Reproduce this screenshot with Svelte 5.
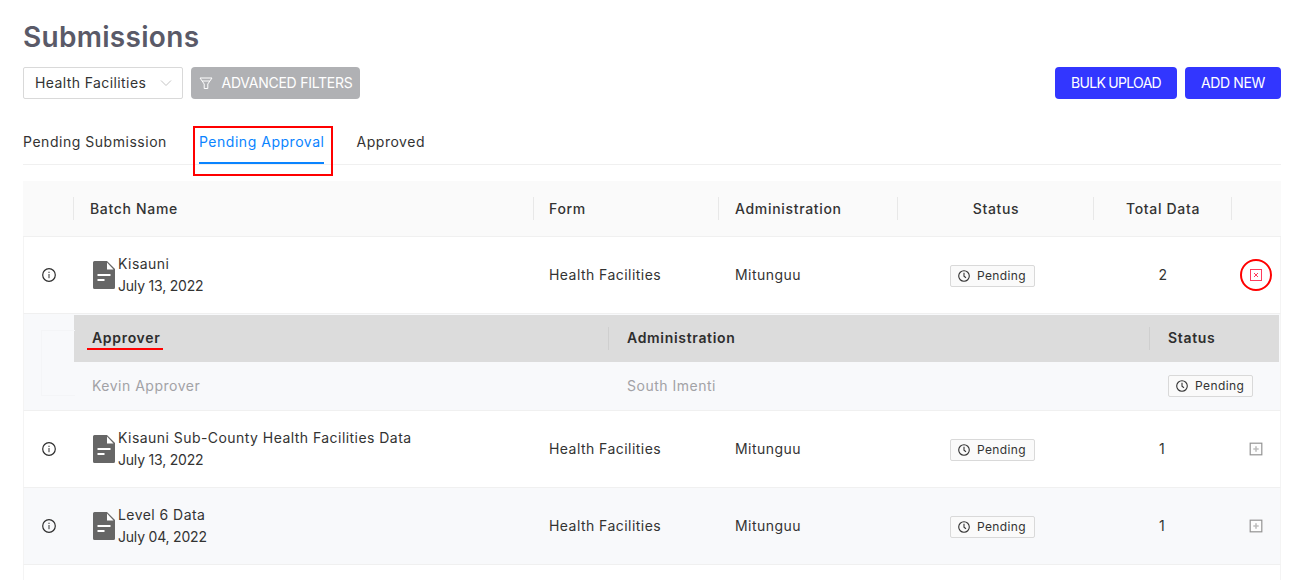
<script>
  const rows = [
    { name: 'Kisauni Sub-County Health Facilities Data', date: 'July 13, 2022', total: 1, alt: false },
    { name: 'Level 6 Data', date: 'July 04, 2022', total: 1, alt: true }
  ];
</script>

{#snippet info()}
  <svg class="info" viewBox="0 0 14 14" width="14" height="14" aria-hidden="true">
    <circle cx="7" cy="7" r="6.300" fill="none" stroke="#2e2e2e" stroke-width="1.200" />
    <rect x="6.400" y="6" width="1.200" height="4.200" fill="#555" />
    <rect x="6.400" y="3.700" width="1.200" height="1.300" fill="#555" />
  </svg>
{/snippet}

{#snippet doc()}
  <svg class="doc" viewBox="0 0 22 28" width="22" height="28" aria-hidden="true">
    <path d="M1.500 0H14L22 8V26.500A1.500 1.500 0 0 1 20.500 28H1.500A1.500 1.500 0 0 1 0 26.500V1.500A1.500 1.500 0 0 1 1.500 0Z" fill="#666" />
    <path d="M14 1.500L20.500 8.500H14Z" fill="#fff" />
    <rect x="4.500" y="13" width="13" height="2" fill="#fff" />
    <rect x="4.500" y="18" width="7" height="2" fill="#fff" />
  </svg>
{/snippet}

{#snippet pending()}
  <span class="tag">
    <svg viewBox="0 0 12 12" width="12" height="12" aria-hidden="true">
      <circle cx="6" cy="6" r="5.300" fill="none" stroke="#333" stroke-width="1.100" />
      <path d="M6 2.800V6.300L8 7.800" fill="none" stroke="#333" stroke-width="1.100" />
    </svg>
    Pending
  </span>
{/snippet}

{#snippet batch(name, date)}
  <div class="batch">
    {@render doc()}
    <div class="names"><div>{name}</div><div class="date">{date}</div></div>
  </div>
{/snippet}

<main>
  <h1>Submissions</h1>

  <div class="toolbar">
    <div class="select">
      <span>Health Facilities</span>
      <svg viewBox="0 0 12 8" width="12" height="8" aria-hidden="true">
        <path d="M1 1.500L6 6.500L11 1.500" fill="none" stroke="#c4c4c4" stroke-width="1" />
      </svg>
    </div>
    <button class="filter">
      <svg viewBox="0 0 14 14" width="14" height="14" aria-hidden="true">
        <path d="M1 2H13L8.800 8V12.500H5.200V8Z M3.200 5H10.800" fill="none" stroke="#fff" stroke-width="1" />
      </svg>
      <span>ADVANCED FILTERS</span>
    </button>
    <div class="spacer"></div>
    <button class="primary bulk">BULK UPLOAD</button>
    <button class="primary add">ADD NEW</button>
  </div>

  <nav class="tabs">
    <span class="tab">Pending Submission</span>
    <span class="tab active">Pending Approval<i class="ink"></i><i class="mark-box"></i></span>
    <span class="tab">Approved</span>
  </nav>

  <section class="table">
    <div class="row head">
      <div class="cell"></div>
      <div class="cell sep wide">Batch Name</div>
      <div class="cell sep">Form</div>
      <div class="cell sep wide">Administration</div>
      <div class="cell sep center nudge">Status</div>
      <div class="cell sep center nudge">Total Data</div>
      <div class="cell sep"></div>
    </div>

    <div class="row body">
      <div class="cell center">{@render info()}</div>
      <div class="cell wide">{@render batch('Kisauni', 'July 13, 2022')}</div>
      <div class="cell line">Health Facilities</div>
      <div class="cell wide line">Mitunguu</div>
      <div class="cell center">{@render pending()}</div>
      <div class="cell center line two">2</div>
      <div class="cell center">
        <span class="toggle">
          <svg viewBox="0 0 14 14" width="14" height="14" aria-hidden="true">
            <rect x="1.500" y="1.500" width="11" height="11" fill="none" stroke="#ff3b5c" stroke-width="1" />
            <path d="M5 5L9 9M9 5L5 9" stroke="#ff3b5c" stroke-width="1" />
          </svg>
          <i class="mark-circle"></i>
        </span>
      </div>
    </div>

    <div class="expanded">
      <div class="ghost"></div>
      <div class="inner">
        <div class="sub subhead">
          <div class="scell first"><span class="approver">Approver<i class="mark-line"></i></span></div>
          <div class="scell sep">Administration</div>
          <div class="scell sep">Status</div>
        </div>
        <div class="sub subbody">
          <div class="scell first">Kevin Approver</div>
          <div class="scell">South Imenti</div>
          <div class="scell">{@render pending()}</div>
        </div>
      </div>
    </div>

    {#each rows as r}
      <div class="row body" class:alt={r.alt}>
        <div class="cell center">{@render info()}</div>
        <div class="cell wide">{@render batch(r.name, r.date)}</div>
        <div class="cell line">Health Facilities</div>
        <div class="cell wide line">Mitunguu</div>
        <div class="cell center">{@render pending()}</div>
        <div class="cell center line">{r.total}</div>
        <div class="cell center">
          <svg class="plus" viewBox="0 0 14 14" width="14" height="14" aria-hidden="true">
            <rect x="1.200" y="1.200" width="11.600" height="11.600" fill="#fdfdfd" stroke="#949494" stroke-width="1.200" />
            <path d="M7 4.300V9.700M4.300 7H9.700" stroke="#bdbdbd" stroke-width="1.600" />
          </svg>
        </div>
      </div>
    {/each}
    <div class="tail"></div>
  </section>
</main>

<style>
  :global(body) {
    margin: 0;
    background: #fff;
    overflow: hidden;
  }
  main {
    height: 580px;
    box-sizing: border-box;
    padding: 0 14px 0 23px;
    font-family: Inter, "Open Sans", sans-serif;
    font-size: 14px;
    color: #333;
    overflow: hidden;
  }
  h1 {
    margin: 0;
    padding-top: 19px;
    font-size: 28px;
    line-height: 36px;
    font-weight: 600;
    color: #5a5a68;
    letter-spacing: 0.3px;
  }
  .toolbar {
    display: flex;
    align-items: center;
    gap: 8px;
    margin-top: 12px;
    height: 32px;
  }
  .select {
    width: 160px;
    height: 32px;
    box-sizing: border-box;
    border: 1px solid #d9d9d9;
    border-radius: 2px;
    padding: 0 10px 1px 11px;
    display: flex;
    align-items: center;
    justify-content: space-between;
    letter-spacing: 0.4px;
  }
  button {
    height: 32px;
    border: 0;
    border-radius: 4px;
    padding: 0 0 1px;
    font: inherit;
    color: #fff;
    display: flex;
    align-items: center;
    justify-content: center;
    white-space: nowrap;
  }
  .filter {
    width: 169px;
    gap: 8px;
    background: #b0b1b4;
  }
  .filter span { letter-spacing: -0.25px; margin-left: 1px; }
  .spacer { flex: 1; }
  .primary { background: #3236ff; }
  .bulk { width: 122px; letter-spacing: -0.7px; }
  .add { width: 96px; letter-spacing: -0.4px; }
  .tabs {
    display: flex;
    gap: 32px;
    margin-top: 21px;
    height: 44px;
    border-bottom: 1px solid #f0f0f0;
  }
  .tab {
    position: relative;
    padding-top: 11px;
    line-height: 22px;
    letter-spacing: 0.53px;
    box-sizing: border-box;
    height: 44px;
  }
  .active { color: #0a84ff; }
  .ink {
    position: absolute;
    left: 0;
    right: 0;
    bottom: 0;
    height: 2px;
    background: #0a84ff;
  }
  .mark-box {
    position: absolute;
    left: -6px;
    right: -9px;
    top: 6px;
    bottom: -12px;
    border: 2px solid #ff0000;
  }
  .table { margin-top: 16px; }
  .row {
    display: grid;
    grid-template-columns: 50px 460px 185px 179px 196px 138px 50px;
  }
  .head {
    height: 56px;
    background: #fafafa;
    border-bottom: 1px solid #f0f0f0;
    box-sizing: border-box;
    font-weight: 500;
    color: #333;
    letter-spacing: 0.68px;
  }
  .cell {
    display: flex;
    align-items: center;
    padding: 0 16px;
    min-width: 0;
    position: relative;
  }
  .wide { padding-left: 17px; }
  .line { padding-bottom: 1px; }
  .center {
    justify-content: center;
    padding-left: 0;
    padding-right: 0;
  }
  .nudge { padding-left: 2px; }
  .two { padding-left: 2px; }
  .head .sep::before,
  .subhead .sep::before {
    content: "";
    position: absolute;
    left: 0;
    top: 50%;
    height: 23px;
    margin-top: -11.500px;
    width: 1px;
    background: #e8e8e8;
  }
  .subhead .sep::before { background: #cfcfcf; }
  .body {
    grid-template-columns: 50px 459px 185px 179px 196px 138px 49px;
    height: 77px;
    box-sizing: border-box;
    border-bottom: 1px solid #f0f0f0;
    border-left: 1px solid #f4f4f4;
    border-right: 1px solid #f4f4f4;
    background: #fff;
    letter-spacing: 0.45px;
  }
  .alt { background: #f8f9fb; }
  .batch {
    display: flex;
    align-items: center;
    gap: 3px;
    margin-left: 2px;
  }
  .doc { flex: none; }
  .names { line-height: 22px; }
  .date { letter-spacing: -0.2px; }
  .tag {
    display: inline-flex;
    align-items: center;
    gap: 7px;
    height: 22px;
    box-sizing: border-box;
    padding: 0 8px 0 7px;
    margin-right: 5px;
    border: 1px solid #d9d9d9;
    border-radius: 2px;
    background: #fafafa;
    font-size: 12px;
    letter-spacing: 0.4px;
    color: #333;
  }
  .cell .tag { margin-top: 1px; }
  .toggle {
    position: relative;
    display: flex;
    margin-left: 1px;
  }
  .mark-circle {
    position: absolute;
    left: -9px;
    top: -9px;
    width: 32px;
    height: 32px;
    box-sizing: border-box;
    border: 2px solid #ff0000;
    border-radius: 50%;
  }
  .plus { margin-left: 1px; }
  .expanded {
    height: 97px;
    box-sizing: border-box;
    background: #f8f9fb;
    border-bottom: 1px solid #f0f0f0;
    border-left: 1px solid #f4f4f4;
    border-right: 1px solid #f4f4f4;
    padding-top: 1px;
    padding-left: 50px;
    position: relative;
  }
  .ghost {
    position: absolute;
    left: 17px;
    top: 16px;
    width: 33px;
    height: 64px;
    border: 1px solid #f4f5f7;
    border-right: 0;
  }
  .inner { width: 1205px; }
  .sub {
    display: grid;
    grid-template-columns: 534px 541px 130px;
  }
  .subhead {
    height: 47px;
    background: #dcdcdc;
    font-weight: 600;
    color: #2e2e2e;
    letter-spacing: 0.68px;
  }
  .subhead .scell { padding-bottom: 2px; }
  .subbody {
    height: 48px;
    color: #a2a2a6;
    letter-spacing: 0.5px;
  }
  .scell {
    position: relative;
    display: flex;
    align-items: center;
    padding: 0 0 1px 19px;
  }
  .subhead .first,
  .subbody .first { padding-left: 18px; }
  .subbody .tag { margin-top: 0; }
  .approver { position: relative; }
  .mark-line {
    position: absolute;
    left: -5px;
    right: -3px;
    bottom: -4px;
    height: 2px;
    background: #ff0000;
  }
  .tail {
    height: 20px;
    border-left: 1px solid #f4f4f4;
    border-right: 1px solid #f4f4f4;
  }
</style>
